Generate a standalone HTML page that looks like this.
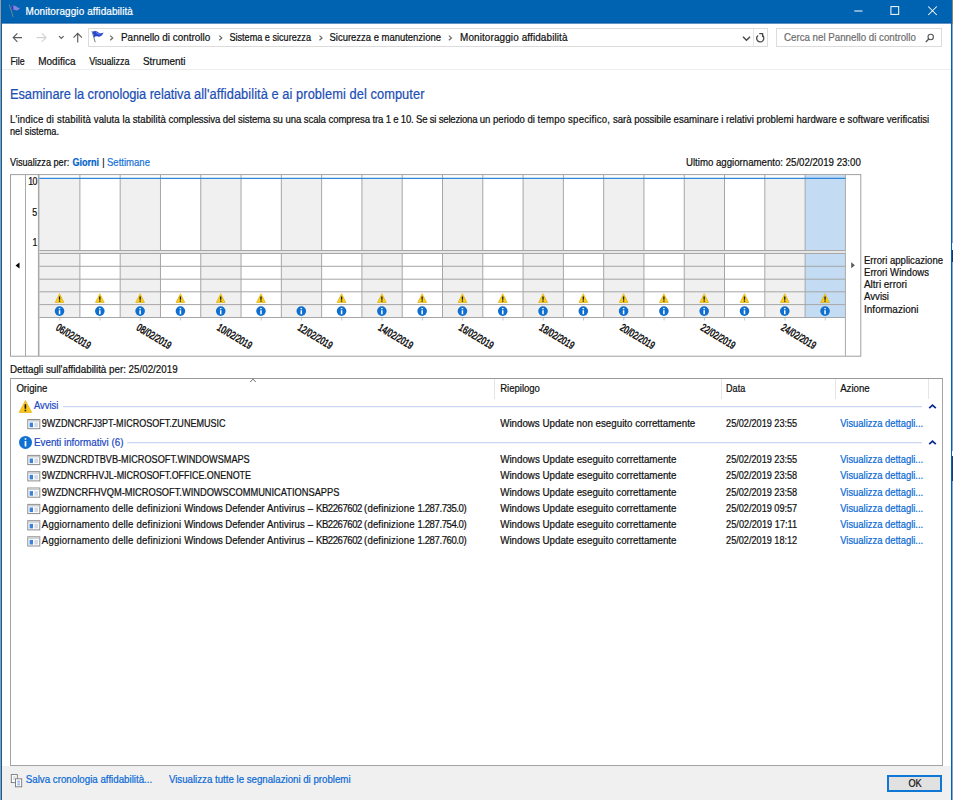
<!DOCTYPE html>
<html lang="it"><head><meta charset="utf-8"><title>Monitoraggio affidabilità</title>
<style>
html,body{margin:0;padding:0;background:#fff}
body{width:953px;height:800px;position:relative;overflow:hidden;font-family:"Liberation Sans", sans-serif;}
.t{position:absolute;white-space:pre;line-height:16px;font-family:"Liberation Sans", sans-serif;-webkit-text-stroke:0.2px currentColor;transform:scaleY(1.14)}
.abs{position:absolute}
</style></head><body>
<!--BG-->
<div class="abs" style="left:0;top:0;width:1px;height:800px;background:#9a9a9a"></div>
<div class="abs" style="left:952px;top:0;width:1px;height:800px;background:#8ea6cc"></div>
<div class="abs" style="left:952px;top:0;width:1px;height:24px;background:#8c8378"></div>
<div class="abs" style="left:952px;top:243px;width:1px;height:7px;background:#eeeef6"></div>
<div class="abs" style="left:952px;top:250px;width:1px;height:12px;background:#1c3a72"></div>
<div class="abs" style="left:952px;top:451px;width:1px;height:5px;background:#ffffff"></div>
<div class="abs" style="left:952px;top:456px;width:1px;height:25px;background:#1f3d78"></div>
<div class="abs" style="left:1px;top:0;width:951px;height:800px;background:#0063b1"></div>
<div class="abs" style="left:2px;top:22px;width:949px;height:1px;background:#0058a8"></div>
<div class="abs" style="left:2px;top:23px;width:949px;height:1px;background:#5f95c8"></div>
<div class="abs" style="left:2px;top:24px;width:949px;height:776px;background:#fff"></div>
<div class="abs" style="left:2px;top:766px;width:949px;height:34px;background:#f0f0f0"></div>
<!--NAV-->
<div class="abs" style="left:88px;top:28px;width:678px;height:17px;border:1px solid #dcdcdc;background:#fff"></div>
<div class="abs" style="left:753px;top:29px;width:1px;height:17px;background:#e5e5e5"></div>
<div class="abs" style="left:776px;top:28px;width:164px;height:17px;border:1px solid #dcdcdc;background:#fff"></div>
<div class="abs" style="left:2px;top:69px;width:949px;height:1px;background:#ededed"></div>
<!--TABLEBOX-->
<div class="abs" style="left:10px;top:378px;width:931px;height:386px;border:1px solid #a3a3a3;border-top-color:#999;background:#fff;box-sizing:content-box"></div>
<!--CHART-->
<svg class="chart" width="953" height="800" viewBox="0 0 953 800" style="position:absolute;left:0;top:0"><rect x="10.5" y="174.6" width="850.3" height="181.6" fill="#fff" stroke="#a0a0a0"/><rect x="39.60" y="178" width="40.29" height="139.5" fill="#f0f0f0"/><rect x="79.89" y="178" width="40.29" height="139.5" fill="#ffffff"/><rect x="120.18" y="178" width="40.29" height="139.5" fill="#f0f0f0"/><rect x="160.47" y="178" width="40.29" height="139.5" fill="#ffffff"/><rect x="200.76" y="178" width="40.29" height="139.5" fill="#f0f0f0"/><rect x="241.05" y="178" width="40.29" height="139.5" fill="#ffffff"/><rect x="281.34" y="178" width="40.29" height="139.5" fill="#f0f0f0"/><rect x="321.63" y="178" width="40.29" height="139.5" fill="#ffffff"/><rect x="361.92" y="178" width="40.29" height="139.5" fill="#f0f0f0"/><rect x="402.21" y="178" width="40.29" height="139.5" fill="#ffffff"/><rect x="442.50" y="178" width="40.29" height="139.5" fill="#f0f0f0"/><rect x="482.79" y="178" width="40.29" height="139.5" fill="#ffffff"/><rect x="523.08" y="178" width="40.29" height="139.5" fill="#f0f0f0"/><rect x="563.37" y="178" width="40.29" height="139.5" fill="#ffffff"/><rect x="603.66" y="178" width="40.29" height="139.5" fill="#f0f0f0"/><rect x="643.95" y="178" width="40.29" height="139.5" fill="#ffffff"/><rect x="684.24" y="178" width="40.29" height="139.5" fill="#f0f0f0"/><rect x="724.53" y="178" width="40.29" height="139.5" fill="#ffffff"/><rect x="764.82" y="178" width="40.29" height="139.5" fill="#f0f0f0"/><rect x="805.11" y="175.1" width="40.29" height="142.4" fill="#c3dcf4"/><path d="M25.5 175V356M845.4 175V356" stroke="#a9a9a9" fill="none"/><path d="M38.7 175V356" stroke="#a9a9a9" stroke-width="1.6" fill="none"/><path d="M79.89 175V317.5M120.18 175V317.5M160.47 175V317.5M200.76 175V317.5M241.05 175V317.5M281.34 175V317.5M321.63 175V317.5M361.92 175V317.5M402.21 175V317.5M442.50 175V317.5M482.79 175V317.5M523.08 175V317.5M563.37 175V317.5M603.66 175V317.5M643.95 175V317.5M684.24 175V317.5M724.53 175V317.5M764.82 175V317.5M805.11 175V317.5" stroke="#a6a6a6" fill="none"/><rect x="39.4" y="250.5" width="806" height="3" fill="#e6e6e6"/><path d="M39.4 250.5H845.4M39.4 253.5H845.4M39.4 266.3H845.4M39.4 279.2H845.4M39.4 291.8H845.4M39.4 304.6H845.4M39.4 317.5H845.4" stroke="#a6a6a6" fill="none"/><path d="M39.3 178.4H845.4" stroke="#2f86dc" stroke-width="1.1" fill="none"/><path d="M59.75 318V320.5M100.03 318V320.5M140.33 318V320.5M180.62 318V320.5M220.91 318V320.5M261.19 318V320.5M301.49 318V320.5M341.77 318V320.5M382.06 318V320.5M422.36 318V320.5M462.64 318V320.5M502.94 318V320.5M543.23 318V320.5M583.51 318V320.5M623.80 318V320.5M664.10 318V320.5M704.38 318V320.5M744.67 318V320.5M784.97 318V320.5M825.25 318V320.5" stroke="#c8c8c8" fill="none"/><path d="M19.5 262.5L15.5 265.5L19.5 268.5Z" fill="#000"/><path d="M851.2 262.2L854.9 265.2L851.2 268.2Z" fill="#5a5a5a"/><defs><g id="warn"><path d="M0 -4.6L4.4 4.2H-4.4Z" fill="#f8cf1c" stroke="#e0a800" stroke-width="0.6" stroke-linejoin="round"/><path d="M0 -1.8V1.4M0 2.3V3.4" stroke="#111" stroke-width="1.3"/></g><g id="info"><circle r="4.8" fill="#0f6fd1"/><path d="M0 -3V-1.9M0 -0.9V3.1" stroke="#fff" stroke-width="1.5"/></g></defs><use href="#warn" x="59.55" y="298.3"/><use href="#info" x="59.55" y="311.1"/><use href="#warn" x="99.83" y="298.3"/><use href="#info" x="99.83" y="311.1"/><use href="#warn" x="140.13" y="298.3"/><use href="#info" x="140.13" y="311.1"/><use href="#warn" x="180.42" y="298.3"/><use href="#info" x="180.42" y="311.1"/><use href="#warn" x="220.71" y="298.3"/><use href="#info" x="220.71" y="311.1"/><use href="#warn" x="261.00" y="298.3"/><use href="#info" x="261.00" y="311.1"/><use href="#info" x="301.29" y="311.1"/><use href="#warn" x="341.57" y="298.3"/><use href="#info" x="341.57" y="311.1"/><use href="#warn" x="381.87" y="298.3"/><use href="#info" x="381.87" y="311.1"/><use href="#warn" x="422.16" y="298.3"/><use href="#info" x="422.16" y="311.1"/><use href="#warn" x="462.44" y="298.3"/><use href="#info" x="462.44" y="311.1"/><use href="#warn" x="502.74" y="298.3"/><use href="#info" x="502.74" y="311.1"/><use href="#warn" x="543.02" y="298.3"/><use href="#info" x="543.02" y="311.1"/><use href="#warn" x="583.31" y="298.3"/><use href="#info" x="583.31" y="311.1"/><use href="#warn" x="623.60" y="298.3"/><use href="#info" x="623.60" y="311.1"/><use href="#warn" x="663.89" y="298.3"/><use href="#info" x="663.89" y="311.1"/><use href="#warn" x="704.18" y="298.3"/><use href="#info" x="704.18" y="311.1"/><use href="#warn" x="744.47" y="298.3"/><use href="#info" x="744.47" y="311.1"/><use href="#warn" x="784.76" y="298.3"/><use href="#info" x="784.76" y="311.1"/><use href="#warn" x="825.05" y="298.3"/><use href="#info" x="825.05" y="311.1"/><text x="0" y="0" transform="translate(55.15 329.6) rotate(31)" font-family="Liberation Sans, sans-serif" font-size="10.6" fill="#0a0a0a" stroke="#0a0a0a" stroke-width="0.45" textLength="38.5" lengthAdjust="spacingAndGlyphs">06/02/2019</text><text x="0" y="0" transform="translate(135.73 329.6) rotate(31)" font-family="Liberation Sans, sans-serif" font-size="10.6" fill="#0a0a0a" stroke="#0a0a0a" stroke-width="0.45" textLength="38.5" lengthAdjust="spacingAndGlyphs">08/02/2019</text><text x="0" y="0" transform="translate(216.31 329.6) rotate(31)" font-family="Liberation Sans, sans-serif" font-size="10.6" fill="#0a0a0a" stroke="#0a0a0a" stroke-width="0.45" textLength="38.5" lengthAdjust="spacingAndGlyphs">10/02/2019</text><text x="0" y="0" transform="translate(296.88 329.6) rotate(31)" font-family="Liberation Sans, sans-serif" font-size="10.6" fill="#0a0a0a" stroke="#0a0a0a" stroke-width="0.45" textLength="38.5" lengthAdjust="spacingAndGlyphs">12/02/2019</text><text x="0" y="0" transform="translate(377.46 329.6) rotate(31)" font-family="Liberation Sans, sans-serif" font-size="10.6" fill="#0a0a0a" stroke="#0a0a0a" stroke-width="0.45" textLength="38.5" lengthAdjust="spacingAndGlyphs">14/02/2019</text><text x="0" y="0" transform="translate(458.04 329.6) rotate(31)" font-family="Liberation Sans, sans-serif" font-size="10.6" fill="#0a0a0a" stroke="#0a0a0a" stroke-width="0.45" textLength="38.5" lengthAdjust="spacingAndGlyphs">16/02/2019</text><text x="0" y="0" transform="translate(538.62 329.6) rotate(31)" font-family="Liberation Sans, sans-serif" font-size="10.6" fill="#0a0a0a" stroke="#0a0a0a" stroke-width="0.45" textLength="38.5" lengthAdjust="spacingAndGlyphs">18/02/2019</text><text x="0" y="0" transform="translate(619.20 329.6) rotate(31)" font-family="Liberation Sans, sans-serif" font-size="10.6" fill="#0a0a0a" stroke="#0a0a0a" stroke-width="0.45" textLength="38.5" lengthAdjust="spacingAndGlyphs">20/02/2019</text><text x="0" y="0" transform="translate(699.78 329.6) rotate(31)" font-family="Liberation Sans, sans-serif" font-size="10.6" fill="#0a0a0a" stroke="#0a0a0a" stroke-width="0.45" textLength="38.5" lengthAdjust="spacingAndGlyphs">22/02/2019</text><text x="0" y="0" transform="translate(780.37 329.6) rotate(31)" font-family="Liberation Sans, sans-serif" font-size="10.6" fill="#0a0a0a" stroke="#0a0a0a" stroke-width="0.45" textLength="38.5" lengthAdjust="spacingAndGlyphs">24/02/2019</text></svg>
<svg width="953" height="800" viewBox="0 0 953 800" style="position:absolute;left:0;top:0"><path d="M9.2 4.6L13.2 17" stroke="#7d8a8a" stroke-width="0.9" fill="none"/><path d="M11.3 6.3C13 4.8 15 5.3 16.3 6.6C17.6 7.8 19 8.2 20.3 7.6C19.3 9.6 17.6 11 15.6 10.2C14.2 9.6 13.2 9.6 12.4 10.6Z" fill="#7f86de"/><path d="M11.3 6.3C12 5.8 12.6 5.6 13.2 5.6L13.6 9.8C13.1 9.9 12.7 10.2 12.4 10.6Z" fill="#2a3fc0"/><path d="M854.3 11H862.5" stroke="#fff" stroke-width="1" fill="none"/><rect x="890.9" y="6.6" width="7.8" height="7.8" stroke="#fff" stroke-width="1" fill="none"/><path d="M928.2 6.5L936.8 15M936.8 6.5L928.2 15" stroke="#fff" stroke-width="1.05" fill="none"/><path d="M22 37.6H13.2M17.4 33.4L13.2 37.6L17.4 41.8" stroke="#5a5a5a" stroke-width="1.15" fill="none"/><path d="M36.6 37.6H46M41.8 33.4L46 37.6L41.8 41.8" stroke="#d2d2d2" stroke-width="1.15" fill="none"/><path d="M59 36.1L61.3 38.4L63.6 36.1" stroke="#5f5f5f" stroke-width="1.25" fill="none"/><path d="M77.7 42.4V33.4M73.5 37.6L77.7 33.4L81.9 37.6" stroke="#5a5a5a" stroke-width="1.15" fill="none"/><path d="M92 31L95.2 42.2" stroke="#6b7a80" stroke-width="1" fill="none"/><path d="M92.6 31.8C94.4 30.4 96.3 30.8 97.8 32C99.4 33.3 101.4 33.6 103.6 32.6C102.6 35.2 100.6 37.4 98 36.6C96.4 36.1 95.2 36.2 94.2 37.4Z" fill="#2747cf"/><path d="M96 32.4C97.4 33.6 99 34.2 100.6 34" stroke="#7f9af0" stroke-width="0.9" fill="none"/><path d="M110.2 35.6L112.7 37.9L110.2 40.2" stroke="#6a6a6a" stroke-width="1.25" fill="none"/><path d="M219.29999999999998 35.6L221.79999999999998 37.9L219.29999999999998 40.2" stroke="#6a6a6a" stroke-width="1.25" fill="none"/><path d="M319.5 35.6L322.0 37.9L319.5 40.2" stroke="#6a6a6a" stroke-width="1.25" fill="none"/><path d="M448.9 35.6L451.4 37.9L448.9 40.2" stroke="#6a6a6a" stroke-width="1.25" fill="none"/><path d="M743 36.8L746.5 40.3L750 36.8" stroke="#4a4a4a" stroke-width="1.5" fill="none"/><path d="M758.0 35.5A3.6 3.6 0 1 0 762.6 35.6" stroke="#4a4a4a" stroke-width="1.3" fill="none"/><path d="M759.2 33.6H762.6V37" stroke="#4a4a4a" stroke-width="1.3" fill="none"/><circle cx="930.7" cy="37" r="2.7" stroke="#555" stroke-width="1.1" fill="none"/><path d="M928.8 39L925.8 42" stroke="#555" stroke-width="1.3" fill="none"/><path d="M494.5 379V399M721.5 379V399M835.5 379V399M928.5 379V399" stroke="#e5e5e5" fill="none"/><path d="M250.2 382L253 379.1L255.8 382" stroke="#707070" stroke-width="1" fill="none"/><path d="M63 406.6H922M127 442.6H922" stroke="#cdd5f2" stroke-width="1.1" fill="none"/><path d="M929.2 408.2L932.5 405.1L935.8 408.2" stroke="#0c2a8c" stroke-width="1.7" fill="none"/><path d="M929.2 444.2L932.5 441.1L935.8 444.2" stroke="#0c2a8c" stroke-width="1.7" fill="none"/><g transform="translate(25.4 406.7) scale(1.33)"><path d="M0 -4.6L4.7 4.3H-4.7Z" fill="#fbc91a" stroke="#eaa800" stroke-width="0.5" stroke-linejoin="round"/><path d="M0 -1.9V1.5M0 2.3V3.4" stroke="#111" stroke-width="1.2"/></g><g transform="translate(25.5 442.4)"><circle r="6.5" fill="#0f72d2"/><path d="M0 -4.1V-2.7M0 -1.4V4" stroke="#fff" stroke-width="1.7"/></g><g transform="translate(27.3 419.0)"><rect x="0.5" y="0.5" width="12" height="9.2" fill="#fff" stroke="#8c8c8c"/><rect x="1" y="1" width="11" height="1.6" fill="#c9cdd2"/><rect x="2.3" y="3.6" width="3.4" height="4.6" fill="#3c82d8"/><rect x="7" y="3.6" width="3.8" height="4.6" fill="#d3dbe8"/></g><g transform="translate(27.3 454.9)"><rect x="0.5" y="0.5" width="12" height="9.2" fill="#fff" stroke="#8c8c8c"/><rect x="1" y="1" width="11" height="1.6" fill="#c9cdd2"/><rect x="2.3" y="3.6" width="3.4" height="4.6" fill="#3c82d8"/><rect x="7" y="3.6" width="3.8" height="4.6" fill="#d3dbe8"/></g><g transform="translate(27.3 471.2)"><rect x="0.5" y="0.5" width="12" height="9.2" fill="#fff" stroke="#8c8c8c"/><rect x="1" y="1" width="11" height="1.6" fill="#c9cdd2"/><rect x="2.3" y="3.6" width="3.4" height="4.6" fill="#3c82d8"/><rect x="7" y="3.6" width="3.8" height="4.6" fill="#d3dbe8"/></g><g transform="translate(27.3 487.5)"><rect x="0.5" y="0.5" width="12" height="9.2" fill="#fff" stroke="#8c8c8c"/><rect x="1" y="1" width="11" height="1.6" fill="#c9cdd2"/><rect x="2.3" y="3.6" width="3.4" height="4.6" fill="#3c82d8"/><rect x="7" y="3.6" width="3.8" height="4.6" fill="#d3dbe8"/></g><g transform="translate(27.3 503.9)"><rect x="0.5" y="0.5" width="12" height="9.2" fill="#fff" stroke="#8c8c8c"/><rect x="1" y="1" width="11" height="1.6" fill="#c9cdd2"/><rect x="2.3" y="3.6" width="3.4" height="4.6" fill="#3c82d8"/><rect x="7" y="3.6" width="3.8" height="4.6" fill="#d3dbe8"/></g><g transform="translate(27.3 520.2)"><rect x="0.5" y="0.5" width="12" height="9.2" fill="#fff" stroke="#8c8c8c"/><rect x="1" y="1" width="11" height="1.6" fill="#c9cdd2"/><rect x="2.3" y="3.6" width="3.4" height="4.6" fill="#3c82d8"/><rect x="7" y="3.6" width="3.8" height="4.6" fill="#d3dbe8"/></g><g transform="translate(27.3 536.3)"><rect x="0.5" y="0.5" width="12" height="9.2" fill="#fff" stroke="#8c8c8c"/><rect x="1" y="1" width="11" height="1.6" fill="#c9cdd2"/><rect x="2.3" y="3.6" width="3.4" height="4.6" fill="#3c82d8"/><rect x="7" y="3.6" width="3.8" height="4.6" fill="#d3dbe8"/></g><rect x="11.3" y="774.6" width="6" height="8" fill="#fff" stroke="#777" stroke-width="0.9"/><path d="M13 777H15.6M13 779H15.6" stroke="#9ab" stroke-width="0.7"/><rect x="15.5" y="778.8" width="6.2" height="8" fill="#fff" stroke="#777" stroke-width="0.9"/><path d="M17.2 781.2H20M17.2 783H20M17.2 784.8H20" stroke="#5b8be0" stroke-width="0.8"/><rect x="888" y="776" width="53" height="15" fill="#e1e1e1" stroke="#0f78d7" stroke-width="2"/></svg>
<!--TEXT-->
<span class="t" style="left:25.5px;top:4.20px;font-size:9.96px;letter-spacing:0.102px;color:#fff;transform-origin:0 11.00px">Monitoraggio affidabilità</span>
<span class="t" style="left:121.0px;top:30.00px;font-size:9.94px;letter-spacing:-0.003px;color:#111;transform-origin:0 11.00px">Pannello di controllo</span>
<span class="t" style="left:229.4px;top:30.00px;font-size:9.14px;letter-spacing:-0.003px;color:#111;transform-origin:0 11.00px">Sistema e sicurezza</span>
<span class="t" style="left:329.5px;top:30.00px;font-size:9.49px;letter-spacing:-0.012px;color:#111;transform-origin:0 11.00px">Sicurezza e manutenzione</span>
<span class="t" style="left:460.0px;top:30.00px;font-size:9.96px;letter-spacing:0.106px;color:#111;transform-origin:0 11.00px">Monitoraggio affidabilità</span>
<span class="t" style="left:784.0px;top:30.00px;font-size:9.74px;letter-spacing:-0.008px;color:#6e6e6e;transform-origin:0 11.00px">Cerca nel Pannello di controllo</span>
<span class="t" style="left:10.5px;top:53.80px;font-size:8.84px;letter-spacing:-0.059px;color:#111;transform-origin:0 11.00px">File</span>
<span class="t" style="left:38.2px;top:53.80px;font-size:9.96px;letter-spacing:0.030px;color:#111;transform-origin:0 11.00px">Modifica</span>
<span class="t" style="left:89.2px;top:53.80px;font-size:9.03px;letter-spacing:-0.004px;color:#111;transform-origin:0 11.00px">Visualizza</span>
<span class="t" style="left:143.0px;top:53.80px;font-size:9.93px;letter-spacing:-0.008px;color:#111;transform-origin:0 11.00px">Strumenti</span>
<span class="t" style="left:10.0px;top:86.60px;font-size:12.86px;letter-spacing:-0.078px;color:#1d4fb5;transform-origin:0 12.00px">Esaminare la cronologia relativa </span>
<span class="t" style="left:194.0px;top:86.60px;font-size:12.86px;letter-spacing:0.056px;color:#1d4fb5;transform-origin:0 12.00px">all&#x27;affidabilità e ai problemi del computer</span>
<span class="t" style="left:10.0px;top:111.50px;font-size:9.61px;letter-spacing:0.162px;color:#111;transform-origin:0 11.00px">L&#x27;indice di stabilità </span>
<span class="t" style="left:93.8px;top:111.50px;font-size:9.61px;letter-spacing:0.055px;color:#111;transform-origin:0 11.00px">valuta la stabilità </span>
<span class="t" style="left:168.5px;top:111.50px;font-size:9.61px;letter-spacing:-0.093px;color:#111;transform-origin:0 11.00px">complessiva del sistema </span>
<span class="t" style="left:272.9px;top:111.50px;font-size:9.61px;letter-spacing:-0.074px;color:#111;transform-origin:0 11.00px">su una scala compresa </span>
<span class="t" style="left:372.6px;top:111.50px;font-size:9.61px;letter-spacing:-0.206px;color:#111;transform-origin:0 11.00px">tra 1 e 10. </span>
<span class="t" style="left:416.0px;top:111.50px;font-size:9.61px;letter-spacing:-0.213px;color:#111;transform-origin:0 11.00px">Se si seleziona </span>
<span class="t" style="left:479.8px;top:111.50px;font-size:9.61px;letter-spacing:-0.031px;color:#111;transform-origin:0 11.00px">un periodo di </span>
<span class="t" style="left:537.5px;top:111.50px;font-size:9.61px;letter-spacing:0.212px;color:#111;transform-origin:0 11.00px">tempo specifico, </span>
<span class="t" style="left:613.1px;top:111.50px;font-size:9.61px;letter-spacing:-0.055px;color:#111;transform-origin:0 11.00px">sarà possibile </span>
<span class="t" style="left:673.6px;top:111.50px;font-size:9.61px;letter-spacing:0.012px;color:#111;transform-origin:0 11.00px">esaminare i relativi </span>
<span class="t" style="left:756.5px;top:111.50px;font-size:9.61px;letter-spacing:0.049px;color:#111;transform-origin:0 11.00px">problemi hardware e </span>
<span class="t" style="left:847.6px;top:111.50px;font-size:9.61px;letter-spacing:0.031px;color:#111;transform-origin:0 11.00px">software verificatisi</span>
<span class="t" style="left:10.0px;top:124.40px;font-size:9.21px;letter-spacing:-0.009px;color:#111;transform-origin:0 11.00px">nel sistema.</span>
<span class="t" style="left:10.0px;top:154.70px;font-size:9.17px;letter-spacing:-0.006px;color:#111;transform-origin:0 11.00px">Visualizza per:</span>
<span class="t" style="left:72.4px;top:154.70px;font-size:9.06px;letter-spacing:-0.007px;color:#0563c9;font-weight:700;transform-origin:0 11.00px">Giorni</span>
<span class="t" style="left:102.3px;top:154.70px;font-size:8.84px;letter-spacing:-0.997px;color:#111;transform-origin:0 11.00px">|</span>
<span class="t" style="left:107.0px;top:154.70px;font-size:9.57px;letter-spacing:-0.007px;color:#1874d9;transform-origin:0 11.00px">Settimane</span>
<span class="t" style="left:686.0px;top:154.70px;font-size:9.67px;letter-spacing:-0.006px;color:#111;transform-origin:0 11.00px">Ultimo aggiornamento: 25/02/2019 23:00</span>
<span class="t" style="left:28.3px;top:173.80px;font-size:8.84px;letter-spacing:-0.714px;color:#111;transform-origin:0 11.00px">10</span>
<span class="t" style="left:32.3px;top:204.60px;font-size:8.84px;letter-spacing:-0.522px;color:#111;transform-origin:0 11.00px">5</span>
<span class="t" style="left:32.6px;top:235.40px;font-size:8.84px;letter-spacing:-1.122px;color:#111;transform-origin:0 11.00px">1</span>
<span class="t" style="left:864.0px;top:252.90px;font-size:9.56px;letter-spacing:-0.004px;color:#111;transform-origin:0 11.00px">Errori applicazione</span>
<span class="t" style="left:864.0px;top:265.00px;font-size:9.61px;letter-spacing:-0.003px;color:#111;transform-origin:0 11.00px">Errori Windows</span>
<span class="t" style="left:864.0px;top:277.20px;font-size:9.95px;letter-spacing:-0.007px;color:#111;transform-origin:0 11.00px">Altri errori</span>
<span class="t" style="left:864.0px;top:289.20px;font-size:9.67px;letter-spacing:-0.008px;color:#111;transform-origin:0 11.00px">Avvisi</span>
<span class="t" style="left:864.0px;top:301.50px;font-size:9.96px;letter-spacing:0.023px;color:#111;transform-origin:0 11.00px">Informazioni</span>
<span class="t" style="left:10.0px;top:361.70px;font-size:9.81px;letter-spacing:-0.005px;color:#111;transform-origin:0 11.00px">Dettagli sull&#x27;affidabilità per: 25/02/2019</span>
<span class="t" style="left:16.4px;top:380.50px;font-size:9.64px;letter-spacing:-0.004px;color:#111;transform-origin:0 11.00px">Origine</span>
<span class="t" style="left:500.2px;top:380.50px;font-size:9.55px;letter-spacing:-0.013px;color:#111;transform-origin:0 11.00px">Riepilogo</span>
<span class="t" style="left:726.1px;top:380.50px;font-size:9.06px;letter-spacing:-0.006px;color:#111;transform-origin:0 11.00px">Data</span>
<span class="t" style="left:840.2px;top:380.50px;font-size:9.67px;letter-spacing:-0.005px;color:#111;transform-origin:0 11.00px">Azione</span>
<span class="t" style="left:34.0px;top:398.20px;font-size:9.43px;letter-spacing:-0.006px;color:#2149c4;transform-origin:0 11.00px">Avvisi</span>
<span class="t" style="left:34.0px;top:434.70px;font-size:9.83px;letter-spacing:-0.008px;color:#2149c4;transform-origin:0 11.00px">Eventi informativi (6)</span>
<span class="t" style="left:41.8px;top:416.10px;font-size:9.06px;letter-spacing:-0.005px;color:#111;transform-origin:0 11.00px">9WZDNCRFJ3PT-MICROSOFT.ZUNEMUSIC</span>
<span class="t" style="left:500.2px;top:416.10px;font-size:9.78px;letter-spacing:-0.008px;color:#111;transform-origin:0 11.00px">Windows Update non eseguito correttamente</span>
<span class="t" style="left:726.1px;top:416.10px;font-size:9.16px;letter-spacing:-0.012px;color:#111;transform-origin:0 11.00px">25/02/2019 23:55</span>
<span class="t" style="left:840.2px;top:416.10px;font-size:9.44px;letter-spacing:-0.005px;color:#0b6ad6;transform-origin:0 11.00px">Visualizza dettagli...</span>
<span class="t" style="left:41.8px;top:452.00px;font-size:9.17px;letter-spacing:-0.004px;color:#111;transform-origin:0 11.00px">9WZDNCRDTBVB-MICROSOFT.WINDOWSMAPS</span>
<span class="t" style="left:500.2px;top:452.00px;font-size:9.79px;letter-spacing:-0.011px;color:#111;transform-origin:0 11.00px">Windows Update eseguito correttamente</span>
<span class="t" style="left:726.1px;top:452.00px;font-size:9.16px;letter-spacing:-0.012px;color:#111;transform-origin:0 11.00px">25/02/2019 23:55</span>
<span class="t" style="left:840.2px;top:452.00px;font-size:9.44px;letter-spacing:-0.005px;color:#0b6ad6;transform-origin:0 11.00px">Visualizza dettagli...</span>
<span class="t" style="left:41.8px;top:468.30px;font-size:8.95px;letter-spacing:-0.009px;color:#111;transform-origin:0 11.00px">9WZDNCRFHVJL-MICROSOFT.OFFICE.ONENOTE</span>
<span class="t" style="left:500.2px;top:468.30px;font-size:9.79px;letter-spacing:-0.011px;color:#111;transform-origin:0 11.00px">Windows Update eseguito correttamente</span>
<span class="t" style="left:726.1px;top:468.30px;font-size:9.16px;letter-spacing:-0.012px;color:#111;transform-origin:0 11.00px">25/02/2019 23:58</span>
<span class="t" style="left:840.2px;top:468.30px;font-size:9.44px;letter-spacing:-0.005px;color:#0b6ad6;transform-origin:0 11.00px">Visualizza dettagli...</span>
<span class="t" style="left:41.8px;top:484.60px;font-size:9.3px;letter-spacing:-0.016px;color:#111;transform-origin:0 11.00px">9WZDNCRFHVQM-MICROSOFT.WINDOWSCOMMUNICATIONSAPPS</span>
<span class="t" style="left:500.2px;top:484.60px;font-size:9.79px;letter-spacing:-0.011px;color:#111;transform-origin:0 11.00px">Windows Update eseguito correttamente</span>
<span class="t" style="left:726.1px;top:484.60px;font-size:9.16px;letter-spacing:-0.012px;color:#111;transform-origin:0 11.00px">25/02/2019 23:58</span>
<span class="t" style="left:840.2px;top:484.60px;font-size:9.44px;letter-spacing:-0.005px;color:#0b6ad6;transform-origin:0 11.00px">Visualizza dettagli...</span>
<span class="t" style="left:41.8px;top:501.00px;font-size:9.59px;letter-spacing:0.210px;color:#111;transform-origin:0 11.00px">Aggiornamento delle definizioni </span>
<span class="t" style="left:184.3px;top:501.00px;font-size:9.59px;letter-spacing:-0.058px;color:#111;transform-origin:0 11.00px">Windows Defender </span>
<span class="t" style="left:266.9px;top:501.00px;font-size:9.59px;letter-spacing:0.142px;color:#111;transform-origin:0 11.00px">Antivirus – </span>
<span class="t" style="left:316.0px;top:501.00px;font-size:9.59px;letter-spacing:-0.463px;color:#111;transform-origin:0 11.00px">KB2267602 </span>
<span class="t" style="left:364.1px;top:501.00px;font-size:9.59px;letter-spacing:0.134px;color:#111;transform-origin:0 11.00px">(definizione </span>
<span class="t" style="left:417.5px;top:501.00px;font-size:9.59px;letter-spacing:-0.416px;color:#111;transform-origin:0 11.00px">1.287.735.0)</span>
<span class="t" style="left:500.2px;top:501.00px;font-size:9.79px;letter-spacing:-0.011px;color:#111;transform-origin:0 11.00px">Windows Update eseguito correttamente</span>
<span class="t" style="left:726.1px;top:501.00px;font-size:9.16px;letter-spacing:-0.012px;color:#111;transform-origin:0 11.00px">25/02/2019 09:57</span>
<span class="t" style="left:840.2px;top:501.00px;font-size:9.44px;letter-spacing:-0.005px;color:#0b6ad6;transform-origin:0 11.00px">Visualizza dettagli...</span>
<span class="t" style="left:41.8px;top:517.30px;font-size:9.59px;letter-spacing:0.210px;color:#111;transform-origin:0 11.00px">Aggiornamento delle definizioni </span>
<span class="t" style="left:184.3px;top:517.30px;font-size:9.59px;letter-spacing:-0.058px;color:#111;transform-origin:0 11.00px">Windows Defender </span>
<span class="t" style="left:266.9px;top:517.30px;font-size:9.59px;letter-spacing:0.142px;color:#111;transform-origin:0 11.00px">Antivirus – </span>
<span class="t" style="left:316.0px;top:517.30px;font-size:9.59px;letter-spacing:-0.463px;color:#111;transform-origin:0 11.00px">KB2267602 </span>
<span class="t" style="left:364.1px;top:517.30px;font-size:9.59px;letter-spacing:0.134px;color:#111;transform-origin:0 11.00px">(definizione </span>
<span class="t" style="left:417.5px;top:517.30px;font-size:9.59px;letter-spacing:-0.416px;color:#111;transform-origin:0 11.00px">1.287.754.0)</span>
<span class="t" style="left:500.2px;top:517.30px;font-size:9.79px;letter-spacing:-0.011px;color:#111;transform-origin:0 11.00px">Windows Update eseguito correttamente</span>
<span class="t" style="left:726.1px;top:517.30px;font-size:9.24px;letter-spacing:-0.007px;color:#111;transform-origin:0 11.00px">25/02/2019 17:11</span>
<span class="t" style="left:840.2px;top:517.30px;font-size:9.44px;letter-spacing:-0.005px;color:#0b6ad6;transform-origin:0 11.00px">Visualizza dettagli...</span>
<span class="t" style="left:41.8px;top:533.40px;font-size:9.59px;letter-spacing:0.210px;color:#111;transform-origin:0 11.00px">Aggiornamento delle definizioni </span>
<span class="t" style="left:184.3px;top:533.40px;font-size:9.59px;letter-spacing:-0.058px;color:#111;transform-origin:0 11.00px">Windows Defender </span>
<span class="t" style="left:266.9px;top:533.40px;font-size:9.59px;letter-spacing:0.142px;color:#111;transform-origin:0 11.00px">Antivirus – </span>
<span class="t" style="left:316.0px;top:533.40px;font-size:9.59px;letter-spacing:-0.463px;color:#111;transform-origin:0 11.00px">KB2267602 </span>
<span class="t" style="left:364.1px;top:533.40px;font-size:9.59px;letter-spacing:0.134px;color:#111;transform-origin:0 11.00px">(definizione </span>
<span class="t" style="left:417.5px;top:533.40px;font-size:9.59px;letter-spacing:-0.416px;color:#111;transform-origin:0 11.00px">1.287.760.0)</span>
<span class="t" style="left:500.2px;top:533.40px;font-size:9.79px;letter-spacing:-0.011px;color:#111;transform-origin:0 11.00px">Windows Update eseguito correttamente</span>
<span class="t" style="left:726.1px;top:533.40px;font-size:9.16px;letter-spacing:-0.012px;color:#111;transform-origin:0 11.00px">25/02/2019 18:12</span>
<span class="t" style="left:840.2px;top:533.40px;font-size:9.44px;letter-spacing:-0.005px;color:#0b6ad6;transform-origin:0 11.00px">Visualizza dettagli...</span>
<span class="t" style="left:25.8px;top:772.40px;font-size:9.76px;letter-spacing:-0.008px;color:#0b6ad6;transform-origin:0 11.00px">Salva cronologia affidabilità...</span>
<span class="t" style="left:168.9px;top:772.40px;font-size:9.71px;letter-spacing:-0.010px;color:#0b6ad6;transform-origin:0 11.00px">Visualizza tutte le segnalazioni di problemi</span>
<span class="t" style="left:908.4px;top:776.00px;font-size:9.16px;letter-spacing:-0.017px;color:#111;transform-origin:0 11.00px">OK</span>
<!--OK-->
</body></html>
